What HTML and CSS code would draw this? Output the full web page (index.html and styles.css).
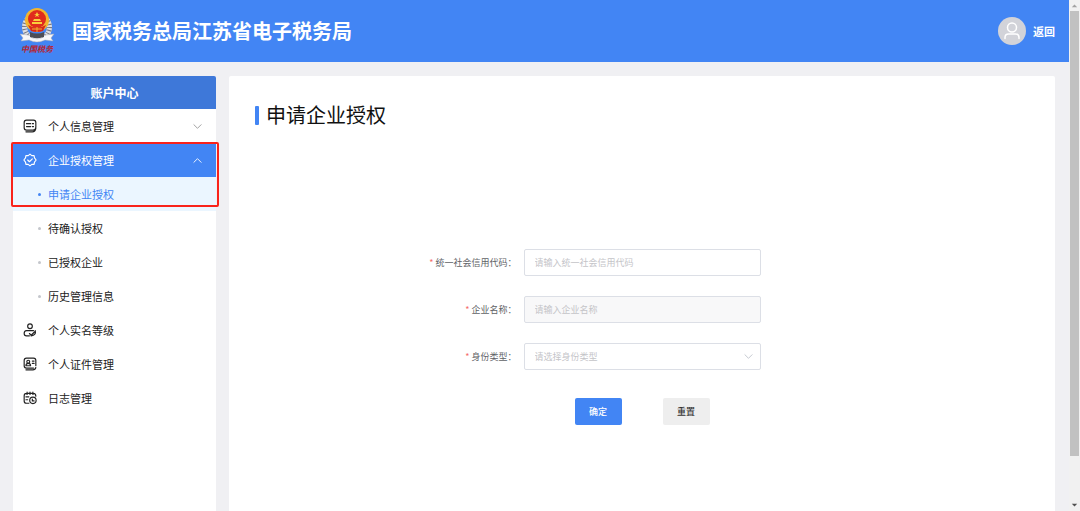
FILE: index.html
```html
<!doctype html>
<html lang="zh-CN">
<head>
	<meta charset="utf-8">
	<meta name="viewport" content="width=device-width, initial-scale=1">
	<title>申请企业授权</title>
	<link rel="stylesheet" href="styles.css">
</head>

<body>
	<div class="page">
		<header class="header">
			<div class="logo">
				<svg class="emblem" viewBox="0 0 36 36" aria-hidden="true">
					<circle cx="18" cy="20" r="12.500" fill="none" stroke="#dcdde2" stroke-width="5"/>
					<circle cx="18" cy="20" r="12.500" fill="none" stroke="#777983" stroke-width="5" stroke-dasharray="1 2"/>
					<path d="M1 27l8 1q9 4 18 0l8-1-3 4 2 3-8-1q-8 4-16 0l-8 1 2-3z" fill="#f6f6f8" stroke="#a9abb5" stroke-width=".5"/>
					<path d="M11 25q7 3 14 0v5q-7 3-14 0z" fill="#4d4e56"/>
					<path d="M13 31q5 2 10 0" fill="none" stroke="#dcdde2"/>
					<circle cx="18" cy="13" r="12" fill="#f3b52e"/>
					<circle cx="18" cy="12" r="9" fill="#e02b1d"/>
					<path d="M18 5l1 2h2l-2 1 1 2-2-1-2 1 1-2-2-1h2zM13 15h10v2H13zM15 12h6l1 2h-8z" fill="#f9cf3b"/>
					<path d="M9 18q9 5 18 0l-3 6q-6 2-12 0z" fill="#d8281c"/>
					<path d="M13 22h10M18 20v5" stroke="#f3b52e"/>
				</svg>
				<span class="logo-text">中国税务</span>
			</div>
			<h1 class="site-title">国家税务总局江苏省电子税务局</h1>
			<a class="back" href="#">
				<svg class="avatar" viewBox="0 0 28 28" aria-hidden="true">
					<circle cx="14" cy="14" r="14" fill="#d2d3d9"/>
					<g fill="none" stroke="#fff" stroke-width="1.500" stroke-linecap="round">
						<circle cx="14" cy="10.500" r="4.500"/>
						<path d="M7 21.500v-1q0-3.500 3.500-3.500h7q3.500 0 3.500 3.500v1"/>
					</g>
				</svg>
				返回
			</a>
		</header>

		<div class="content">
			<nav class="sidebar" aria-label="账户中心">
				<h2 class="sidebar-title">账户中心</h2>
				<button class="menu-item" type="button" aria-expanded="false">
					<svg class="icon" viewBox="0 0 24 24"><path d="M18 19H6q-4 0-4-4V6q0-4 4-4h12q4 0 4 4v8q0 5-5 5M5 22h11q5 0 6-6M6 8h7M16 8h2M6 13h7M16 13h2"/></svg>
					个人信息管理
					<svg class="arrow" viewBox="0 0 10 10"><path d="M1 3l4 4 4-4"/></svg>
				</button>
				<div class="menu-group">
					<button class="menu-item open" type="button" aria-expanded="true">
						<svg class="icon" viewBox="0 0 24 24"><path d="M12 2l3 2.500 4 0 .7 3.800L22.500 12l-2.800 3.700L19 19.500h-4L12 22l-3-2.500H5l-.7-3.800L1.500 12l2.800-3.700L5 4.500h4zM8 12l3 3 5-5"/></svg>
						企业授权管理
						<svg class="arrow" viewBox="0 0 10 10"><path d="M1 7l4-4 4 4"/></svg>
					</button>
					<a class="sub-item active" href="#">申请企业授权</a>
					<a class="sub-item" href="#">待确认授权</a>
					<a class="sub-item" href="#">已授权企业</a>
					<a class="sub-item" href="#">历史管理信息</a>
					<div class="highlight"></div>
				</div>
				<a class="menu-item" href="#">
					<svg class="icon" viewBox="0 0 24 24"><circle cx="12" cy="5.500" r="4"/><path d="M18 13H6q-4 0-4 5 0 4 4 4h5M21 13q2 8-7 9M11 18l3 3 6-6"/></svg>
					个人实名等级
				</a>
				<a class="menu-item" href="#">
					<svg class="icon" viewBox="0 0 24 24"><path d="M18 19H6q-4 0-4-4V6q0-4 4-4h12q4 0 4 4v9M5 22h12q4 0 5-4M5 15q0-4 4-4t4 4zM16 7h3M16 11h3"/><circle cx="9" cy="8" r="2.500"/></svg>
					个人证件管理
				</a>
				<a class="menu-item" href="#">
					<svg class="icon" viewBox="0 0 24 24"><path d="M10 21H6q-4 0-4-4V8q0-4 4-4h12q4 0 4 5M7 2v4M12 2v4M17 2v4M5 10h5M5 15h3"/><circle cx="17" cy="16" r="5.500"/><path d="M16 14v3h3"/></svg>
					日志管理
				</a>
			</nav>

			<main class="panel">
				<h2 class="panel-title">申请企业授权</h2>
				<form class="form">
					<label class="label" for="credit-code">统一社会信用代码：</label>
					<input class="field" id="credit-code" type="text" placeholder="请输入统一社会信用代码">
					<label class="label" for="company">企业名称：</label>
					<input class="field" id="company" type="text" placeholder="请输入企业名称" disabled>
					<label class="label" for="identity">身份类型：</label>
					<div class="select">
						<select class="field" id="identity">
							<option value="">请选择身份类型</option>
						</select>
						<svg class="arrow" viewBox="0 0 10 10"><path d="M1 3l4 4 4-4"/></svg>
					</div>
					<div class="actions">
						<button class="btn primary" type="button">确定</button>
						<button class="btn" type="reset">重置</button>
					</div>
				</form>
			</main>
		</div>
	</div>

	<div class="scrollbar" aria-hidden="true">
		<svg class="scroll-arrow" viewBox="0 0 10 10"><path d="M2 7l3-3 3 3z"/></svg>
		<div class="thumb"></div>
		<svg class="scroll-arrow down" viewBox="0 0 10 10"><path d="M2 3l3 3 3-3z"/></svg>
	</div>
</body>
</html>
```
FILE: styles.css
```css
* {box-sizing: border-box}

body {
	display: flex;
	height: 100vh;
	margin: 0;
	overflow: hidden;
	background: #f0f0f3;
	color: #222;
	font: 11px/16px "Noto Sans CJK SC", sans-serif;
}

h1, h2 {margin: 0}
a {color: inherit; text-decoration: none}

button, input, select {
	margin: 0;
	font: inherit;
	color: inherit;
}

button {cursor: pointer}

.page {
	flex: 1;
	display: flex;
	flex-direction: column;
}

.header {
	display: flex;
	align-items: center;
	height: 62px;
	flex-shrink: 0;
	padding: 0 14px 0 19px;
	background: #4285f4;
	color: #fff;
}

.logo {
	display: flex;
	flex-direction: column;
	align-items: center;
	width: 36px;
	margin-right: 17px;
}

.emblem {
	width: 36px;
	height: 36px;
}

.logo-text {
	color: #b8242f;
	font-size: 8px;
	font-style: italic;
	font-weight: bold;
	line-height: 12px;
	white-space: nowrap;
}

.site-title {
	font-size: 20px;
	line-height: 28px;
}

.back {
	display: flex;
	align-items: center;
	gap: 7px;
	margin-left: auto;
	font-weight: bold;
}

.avatar {
	width: 28px;
	height: 28px;
}

.content {
	flex: 1;
	display: grid;
	grid-template-columns: 203px 1fr;
	gap: 13px;
	padding: 14px 14px 0 13px;
}

.sidebar, .panel {
	background: #fff;
	border-radius: 2px 2px 0 0;
}

.sidebar-title {
	border-radius: 2px 2px 0 0;
	background: #3e78d9;
	color: #fff;
	font-size: 12px;
	line-height: 33px;
	text-align: center;
}

.menu-item, .sub-item {
	display: flex;
	align-items: center;
	width: 100%;
	height: 34px;
	border: 0;
	background: none;
}

.menu-item {
	gap: 11px;
	padding: 0 14px 0 10px;

	&.open {
		background: #4285f4;
		color: #fff;
	}

	.arrow {margin-left: auto}
	&:not(.open) .arrow {color: #999}
}

.icon, .arrow {
	fill: none;
	stroke: currentColor;
	stroke-linecap: round;
	stroke-linejoin: round;
}

.icon {
	width: 14px;
	height: 14px;
	stroke-width: 2;
}

.arrow {
	width: 9px;
	height: 9px;
}

.menu-group {position: relative}

.sub-item {
	gap: 7px;
	padding-left: 25px;

	&::before {
		content: "";
		width: 3px;
		height: 3px;
		border-radius: 50%;
		background: #c4c6cc;
	}

	&.active {
		background: #ebf6ff;
		color: #4285f4;

		&::before {background: #4285f4}
	}
}

.highlight {
	position: absolute;
	top: -1px;
	left: -2px;
	right: -3px;
	height: 65px;
	border: 2px solid #f9231b;
	border-radius: 2px;
	pointer-events: none;
}

.panel {padding: 24px 26px}

.panel-title {
	display: flex;
	align-items: center;
	gap: 7px;
	color: #111;
	font-size: 20px;
	font-weight: normal;
	line-height: 30px;

	&::before {
		content: "";
		width: 4px;
		height: 19px;
		border-radius: 1px;
		background: #4285f4;
	}
}

.form {
	display: grid;
	grid-template-columns: 1fr 237px 1fr;
	gap: 20px 7px;
	margin-top: 119px;
	font-size: 9px;
}

.label {
	grid-column: 1;
	justify-self: end;
	color: #606266;
	line-height: 27px;

	&::before {
		content: "* ";
		color: #f56c6c;
	}
}

.field {
	width: 100%;
	height: 27px;
	padding: 0 10px;
	border: 1px solid #dcdfe6;
	border-radius: 2px;
	background: #fff;

	&::placeholder {color: #c4c4c8}
	&:disabled {background: #f8f8f9}
}

.select {
	position: relative;

	.field {
		appearance: none;
		color: #c4c4c8;
	}

	.arrow {
		position: absolute;
		top: 9px;
		right: 8px;
		color: #c0c4cc;
		pointer-events: none;
	}
}

.actions {
	grid-column: 1 / -1;
	display: flex;
	justify-content: center;
	gap: 41px;
	margin-top: 8px;
}

.btn {
	width: 47px;
	height: 27px;
	padding: 0;
	border: 0;
	border-radius: 2px;
	background: #eee;
	color: #333;
	font-weight: 500;

	&.primary {
		background: #4285f4;
		color: #fff;
	}
}

.scrollbar {
	display: flex;
	flex-direction: column;
	width: 11px;
	padding: 0 1px;
	background: #f1f1f1;
}

.scroll-arrow {
	height: 11px;
	fill: #a3a3a3;

	&.down {
		margin-top: auto;
		fill: #505050;
	}
}

.thumb {
	height: 87%;
	background: #c1c1c1;
}
```
